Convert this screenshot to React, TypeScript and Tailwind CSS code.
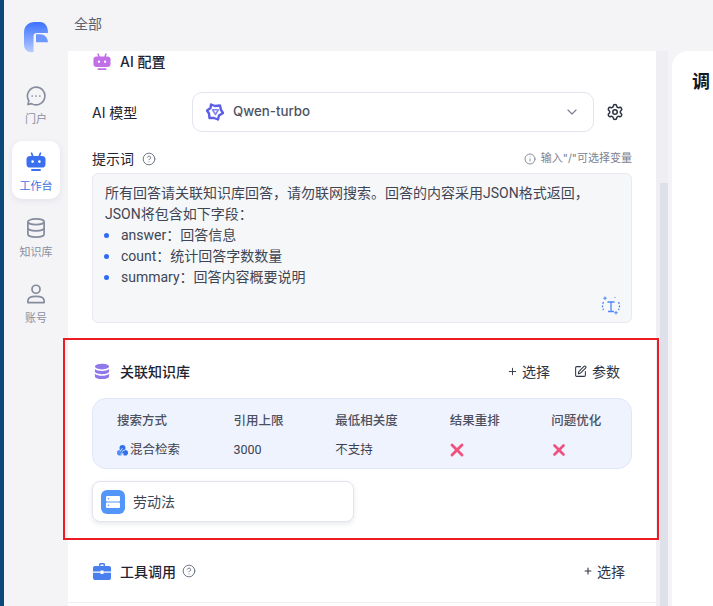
import React from "react";
import { ChevronDown, Settings, CircleHelp, Info, Plus, SquarePen, X } from "lucide-react";

function Robot({ color, size = 20 }: { color: string; size?: number }) {
  return (
    <svg width={size} height={size} viewBox="0 0 20 20" fill="none">
      <path d="M5.6 1.2 L6.8 4.5 M14.4 1.2 L13.2 4.5" stroke={color} strokeWidth="1.7" strokeLinecap="round" />
      <rect x="0.500" y="4" width="19" height="11.500" rx="3.600" fill={color} />
      <circle cx="6.600" cy="9.600" r="1.300" fill="#fff" />
      <circle cx="13.400" cy="9.600" r="1.300" fill="#fff" />
      <rect x="5" y="17" width="10" height="2" rx="1" fill={color} />
    </svg>
  );
}

function NavItem({ label, active, tight, children }: { label: string; active?: boolean; tight?: boolean; children: React.ReactNode }) {
  return (
    <div
      className={
        "w-[48px] h-[58px] pt-[11px] flex flex-col items-center rounded-[10px] " +
        (tight ? "gap-[6px] " : "gap-[7px] ") +
        (active ? "bg-white shadow-[0_2px_6px_rgba(120,130,160,0.14)]" : "")
      }
    >
      {children}
      <span className={"text-[11px] leading-[14px] " + (active ? "text-[#3f6fe0]" : "text-[#8a90a0]")}>{label}</span>
    </div>
  );
}

function Cell({ children, className }: { children: React.ReactNode; className: string }) {
  return <div className={"flex items-center " + className}>{children}</div>;
}

export default function App() {
  return (
    <div className="relative flex w-[713px] h-[606px] overflow-hidden bg-[#f4f4f7] font-['Inter','Noto_Sans_CJK_SC',sans-serif] text-[#1f2430]">
      <div className="w-1 h-full bg-[#0b4a78]" />
      <aside className="w-[64px] h-full flex flex-col items-center">
        <svg className="mt-[22px]" width="24" height="31" viewBox="0 0 24 31">
          <defs>
            <linearGradient id="lg" x1="0" y1="0" x2="0" y2="1">
              <stop offset="0" stopColor="#3d71ff" />
              <stop offset="1" stopColor="#b4ccff" />
            </linearGradient>
          </defs>
          <path d="M0 11 C0 4 4 0 11 0 H16 C21 0 24 4 24 11 H13 C10.500 11 9.500 12 9.500 14.500 V30 C4 31 0 28 0 22 Z" fill="url(#lg)" />
          <path d="M12 12.300 H16 C20.500 12.300 23.500 15.500 24 20.300 H12 Z" fill="#6f98ff" />
        </svg>
        <div className="mt-[22px] flex flex-col items-center gap-[8px]">
          <NavItem label="门户" tight>
            <svg width="20" height="20" viewBox="0 0 21 21" fill="none" stroke="#858c9e" strokeWidth="1.700">
              <path d="M10.500 1.200 A9.300 9.300 0 1 1 5.800 18.500 L2 19.500 L3 15.500 A9.300 9.300 0 0 1 10.500 1.200 Z" strokeLinejoin="round" />
              <circle cx="6.500" cy="10.500" r="0.900" fill="#858c9e" stroke="none" />
              <circle cx="10.500" cy="10.500" r="0.900" fill="#858c9e" stroke="none" />
              <circle cx="14.500" cy="10.500" r="0.900" fill="#858c9e" stroke="none" />
            </svg>
          </NavItem>
          <NavItem label="工作台" active>
            <Robot color="#3a70f0" />
          </NavItem>
          <NavItem label="知识库">
            <svg width="20" height="20" viewBox="0 0 20 21" fill="none" stroke="#858c9e" strokeWidth="1.800">
              <ellipse cx="10" cy="4" rx="8.500" ry="3" />
              <path d="M1.500 4 V17 C1.500 18.700 5.300 20 10 20 S18.500 18.700 18.500 17 V4" />
              <path d="M1.500 10.500 C1.500 12.200 5.300 13.500 10 13.500 S18.500 12.200 18.500 10.500" />
            </svg>
          </NavItem>
          <NavItem label="账号">
            <svg width="20" height="20" viewBox="0 0 20 21" fill="none" stroke="#858c9e" strokeWidth="1.800">
              <circle cx="10" cy="5.500" r="4.200" />
              <path d="M1.500 19.500 V17.500 C1.500 14.500 4.500 13 10 13 S18.500 14.500 18.500 17.500 V19.500 Z" strokeLinejoin="round" />
            </svg>
          </NavItem>
        </div>
      </aside>
      <main className="flex-1 flex flex-col min-w-0">
        <header className="h-[51px] pl-[6px] pt-[14px] text-[14px] leading-[20px] text-[#5c6270]">全部</header>
        <div className="flex flex-1 min-h-0">
          <section className="w-[588px] bg-white px-[24px] overflow-hidden">
            <div className="h-[22px] flex items-center pl-[1px]">
              <Robot color="#c06fe6" size={18} />
              <span className="ml-[9px] text-[14px] font-medium leading-[22px]">AI 配置</span>
            </div>
            <div className="mt-[19px] flex items-center h-[40px]">
              <span className="w-[100px] text-[14px]">AI 模型</span>
              <div className="w-[402px] h-[40px] rounded-[10px] border border-[#e2e4ee] flex items-center pl-[13px] pr-[13px]">
                <svg width="18" height="18" viewBox="0 0 18 18" fill="none" stroke="#5b5fe8" strokeWidth="2.400" strokeLinejoin="round">
                  <path d="M5 1.500 L9 3 L14 2.500 L15 7 L17 10 L13 12.500 L12 16.500 L8 15 L3.500 15 L3 10.500 L1 7.500 L4.500 5 Z" />
                  <path d="M6.500 6.800 H12.300 L9.500 11.500 Z" stroke="#8285f0" strokeWidth="1.600" />
                </svg>
                <span className="ml-[9px] text-[13.300px] font-medium text-[#4c5263]">Qwen-turbo</span>
                <ChevronDown className="ml-auto text-[#7c8292]" size={16} strokeWidth={1.800} />
              </div>
              <Settings className="ml-[12px] text-[#2c3240]" size={18} strokeWidth={2} />
            </div>
            <div className="mt-[16px] flex items-center h-[21px] text-[14px]">
              <span>提示词</span>
              <CircleHelp className="ml-[8px] text-[#6f7686]" size={14} strokeWidth={1.700} />
              <Info className="ml-auto text-[#7c8292]" size={12} strokeWidth={1.800} />
              <span className="ml-[5px] text-[11px] text-[#7c8292]">输入"/"可选择变量</span>
            </div>
            <div className="relative mt-[4px] h-[150px] rounded-[6px] border border-[#e8eaf0] bg-[#f6f7f9] px-[12px] pt-[9px] font-['Roboto','Noto_Sans_CJK_SC',sans-serif] text-[14px] leading-[21px] text-[#3f4554]">
              <div>所有回答请关联知识库回答，请勿联网搜索。回答的内容采用JSON格式返回，</div>
              <div>JSON将包含如下字段：</div>
              {["answer：回答信息", "count：统计回答字数数量", "summary：回答内容概要说明"].map((t) => (
                <div key={t} className="flex items-center">
                  <span className="ml-[-1px] w-[5px] h-[5px] rounded-full bg-[#2f6bf0]" />
                  <span className="ml-[12px]">{t}</span>
                </div>
              ))}
              <svg className="absolute right-[10px] bottom-[7px]" width="20" height="19" viewBox="0 0 20 19" fill="none" stroke="#4d86f7" strokeWidth="1.300">
                <path d="M6.500 6 H13.500 M10 6 V15.500 M7 15.500 H13" />
                <path d="M2.500 6 Q0.500 10 2.500 14 M17.500 6 Q19.500 10 17.500 14" strokeDasharray="2 1.500" />
                <path d="M4 0.500 V4 M2.200 2.200 H5.800 M15 15 V18.500 M13.200 16.800 H16.800" strokeWidth="1" />
                <path d="M13.500 1 L14.500 2" strokeWidth="1" />
              </svg>
            </div>
            <div className="mt-[37px] h-[22px] flex items-center">
              <svg className="ml-[2px]" width="16" height="17" viewBox="0 0 18 18" fill="#9178ea">
                <ellipse cx="9" cy="3.500" rx="8" ry="3.200" />
                <path d="M1 6.300 C2.500 8 6 8.500 9 8.500 S15.500 8 17 6.300 V9 C17 10.500 13.500 12 9 12 S1 10.500 1 9 Z" />
                <path d="M1 11.500 C2.500 13.200 6 13.800 9 13.800 S15.500 13.200 17 11.500 V14.500 C17 16 13.500 17.500 9 17.500 S1 16 1 14.500 Z" />
              </svg>
              <span className="ml-[10px] text-[14px] font-medium">关联知识库</span>
              <div className="ml-auto flex items-center text-[#2f3544] text-[14px]">
                <Plus size={11} strokeWidth={2} />
                <span className="ml-[4px]">选择</span>
                <SquarePen className="ml-[24px]" size={13} strokeWidth={1.900} />
                <span className="ml-[5px] mr-[12px]">参数</span>
              </div>
            </div>
            <div className="mt-[16px] h-[71px] rounded-[14px] border border-[#e0e7f8] bg-[#eff3fd] text-[12.500px] flex flex-col pl-[24px] font-['Roboto','Noto_Sans_CJK_SC',sans-serif]">
              <div className="flex h-[22px] mt-[11px] items-center font-medium text-[#4b5160]">
                <Cell className="w-[117px]">搜索方式</Cell>
                <Cell className="w-[102px]">引用上限</Cell>
                <Cell className="w-[115px]">最低相关度</Cell>
                <Cell className="w-[102px]">结果重排</Cell>
                <Cell className="w-[80px]">问题优化</Cell>
              </div>
              <div className="flex h-[22px] mt-[7px] items-center text-[#3b4150]">
                <Cell className="w-[117px]">
                  <svg width="11" height="11" viewBox="0 0 11 11">
                    <circle cx="5.500" cy="3" r="3" fill="#2f6fe8" />
                    <circle cx="2.800" cy="7.700" r="2.800" fill="#4c8df5" />
                    <circle cx="8.200" cy="7.700" r="2.800" fill="#2f6fe8" />
                    <path d="M5.500 3 L3 6.500 M5.500 6 L8 5 M3.500 9 H7" stroke="#eff3fd" strokeWidth="0.800" />
                  </svg>
                  <span className="ml-[2px]">混合检索</span>
                </Cell>
                <Cell className="w-[102px]">3000</Cell>
                <Cell className="w-[115px]">不支持</Cell>
                <Cell className="w-[102px]"><X className="text-[#f0527f] ml-[-3px]" size={20} strokeWidth={3.400} /></Cell>
                <Cell className="w-[80px]"><X className="text-[#f0527f] ml-[-1px]" size={18} strokeWidth={3.600} /></Cell>
              </div>
            </div>
            <div className="mt-[12px] w-[262px] h-[41px] rounded-[8px] border border-[#e3e5ee] bg-white shadow-[0_2px_5px_rgba(30,40,70,0.10)] flex items-center pl-[8px]">
              <div className="w-[24px] h-[24px] rounded-[6px] bg-[#5296fb] flex items-center justify-center">
                <svg width="14" height="12" viewBox="0 0 14 12">
                  <rect x="0" y="0" width="14" height="5.400" rx="1" fill="#fff" />
                  <rect x="0" y="6.600" width="14" height="5.400" rx="1" fill="#fff" />
                  <circle cx="2.500" cy="2.700" r="0.800" fill="#5296fb" />
                  <circle cx="2.500" cy="9.300" r="0.800" fill="#5296fb" />
                </svg>
              </div>
              <span className="ml-[8px] text-[14px] text-[#3f4554]">劳动法</span>
            </div>
            <div className="mt-[38px] h-[22px] flex items-center">
              <svg className="ml-[1px]" width="18" height="17" viewBox="0 0 18 17" fill="#4a7ff0">
                <path d="M6 3 V1.500 C6 0.700 6.700 0 7.500 0 H10.500 C11.300 0 12 0.700 12 1.500 V3 H10.600 V1.400 H7.400 V3 Z" />
                <path d="M2 3 H16 C17.100 3 18 3.900 18 5 V8.500 H10.500 V7.500 H7.500 V8.500 H0 V5 C0 3.900 0.900 3 2 3 Z" />
                <path d="M0 9.700 H7.500 V11 H10.500 V9.700 H18 V15 C18 16.100 17.100 17 16 17 H2 C0.900 17 0 16.100 0 15 Z" />
              </svg>
              <span className="ml-[9px] text-[14px] font-medium">工具调用</span>
              <CircleHelp className="ml-[6px] text-[#6f7686]" size={14} strokeWidth={1.700} />
              <div className="ml-auto flex items-center text-[#2f3544] text-[14px] mr-[7px]">
                <Plus size={10} strokeWidth={2.600} />
                <span className="ml-[4px]">选择</span>
              </div>
            </div>
            <div className="mt-[20px] -mx-[24px] border-t border-[#eceef2]" />
          </section>
          <div className="w-[12px] flex flex-col items-end bg-[#eeeef3]">
            <div className="w-[8px] mt-[132px] flex-1 bg-[#dfe1ea]" />
          </div>
          <div className="w-[4px]" />
          <section className="flex-1 bg-white rounded-tl-[16px] pl-[20px] pt-[19px] text-[18px] leading-[24px] font-semibold text-[#14181f] whitespace-nowrap overflow-hidden">
            调
          </section>
        </div>
      </main>
      <div className="absolute left-[63px] top-[338px] w-[596px] h-[202px] border-2 border-[#ed1c24] pointer-events-none" />
    </div>
  );
}
